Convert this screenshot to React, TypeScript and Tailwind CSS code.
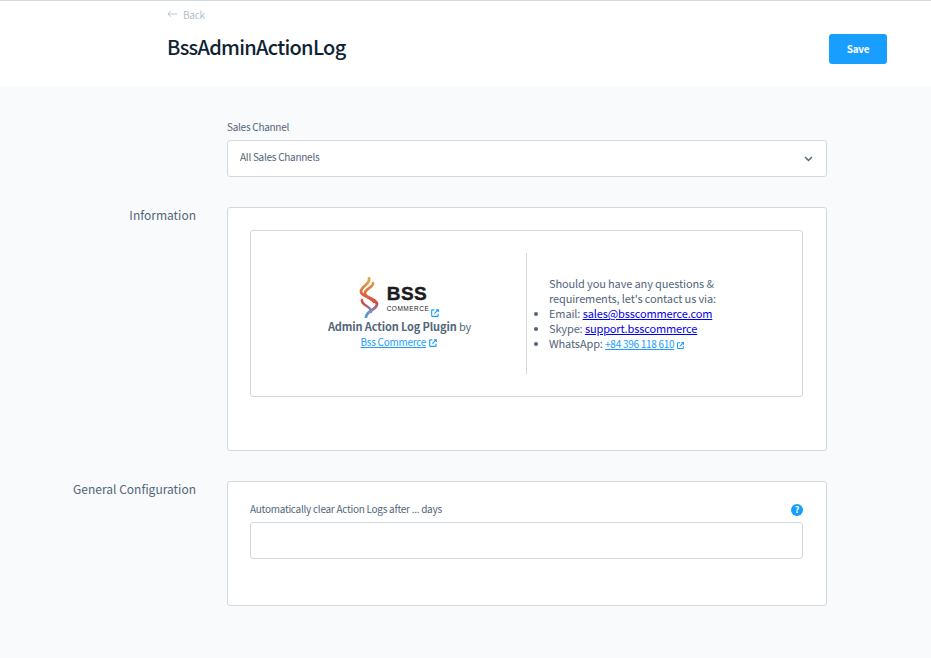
import React from "react";

const F = "font-['Noto_Sans_CJK_SC','Liberation_Sans',sans-serif]";

function Ext({ className = "" }: { className?: string }) {
  return (
    <svg viewBox="0 0 16 16" className={`inline-block ${className}`} fill="none" stroke="currentColor" strokeWidth="1.8">
      <path d="M7 3H3.500A.8.8 0 0 0 2.700 3.800V12.500A.8.8 0 0 0 3.500 13.300H12.200A.8.8 0 0 0 13 12.500V9" />
      <path d="M9.500 2.700H13.300V6.500M13.300 2.700L7 9" />
    </svg>
  );
}

function Logo() {
  return (
    <div className="flex items-start h-[42px]">
      <svg viewBox="0 0 21 41" className="w-[21px] h-[41px]" fill="none" strokeLinecap="round">
        <defs>
          <linearGradient id="a" x1="0" y1="0" x2="0" y2="41" gradientUnits="userSpaceOnUse">
            <stop offset="0" stopColor="#e2b04a" />
            <stop offset="0.4" stopColor="#dd6b3c" />
            <stop offset="0.65" stopColor="#cf4a48" />
            <stop offset="0.85" stopColor="#6c93cc" />
            <stop offset="1" stopColor="#4d9bdc" />
          </linearGradient>
        </defs>
        <path d="M10 1C12 6 3 9 2 14C1 20 17 20 18 27C18 33 8 33 7 40" stroke="url(#a)" strokeWidth="2.800" />
        <path d="M14 6C15 10 6 12 6 16C6 21 14 22 15 25" stroke="url(#a)" strokeWidth="2.600" />
        <path d="M3 23C2 29 13 29 12 35" stroke="url(#a)" strokeWidth="2.600" />
      </svg>
      <div className="ml-[7px] mt-[9px] flex flex-col items-start font-['Liberation_Sans',sans-serif] text-[#1b1b1f]">
        <span className="text-[19px] font-bold tracking-[0.5px] leading-[16px] [-webkit-text-stroke:0.4px_#1b1b1f]">BSS</span>
        <span className="text-[6.500px] tracking-[0.5px] leading-[8px] mt-[3px]">COMMERCE</span>
      </div>
      <Ext className="w-[10px] h-[10px] mt-[31px] ml-[1px] text-[#189eff]" />
    </div>
  );
}

export default function App() {
  return (
    <div className={`min-h-[658px] bg-[#f9fafb] ${F} text-[#52667a]`}>
      <header className="h-[86px] bg-white border-t border-[#d1d9e0] flex justify-between pl-[167px] pr-[44px]">
        <div>
          <div className="flex items-center gap-[5px] mt-[6px] h-[14px] text-[10px] tracking-[-0.27px] text-[#b3bfcc]">
            <svg viewBox="0 0 12 8" className="w-[11px] h-[8px]" fill="none" stroke="currentColor" strokeWidth="1">
              <path d="M11 4H1M4 1L1 4L4 7" />
            </svg>
            <span>Back</span>
          </div>
          <h1 className="mt-[11px] text-[20px] tracking-[-0.7px] leading-[30px] font-medium text-[#0f2433]">BssAdminActionLog</h1>
        </div>
        <button className="mt-[33px] w-[58px] h-[30px] pb-[2px] rounded-[3px] bg-[#189eff] text-white text-[10px] tracking-[-0.27px] font-bold">Save</button>
      </header>

      <main className="pt-[34px] pl-[227px] w-[827px] text-[10px] tracking-[-0.27px]">
        <label className="block leading-[14px] mb-[6px]">Sales Channel</label>
        <div className="h-[37px] pb-[5px] bg-white border border-[#d1d9e0] rounded-[3px] flex items-center justify-between pl-[12px] pr-[13px]">
          <span>All Sales Channels</span>
          <svg viewBox="0 0 10 7" className="w-[9px] h-[6px] mt-[5px] text-[#52667a]" fill="none" stroke="currentColor" strokeWidth="1.800">
            <path d="M1 1.200L5 5.200L9 1.200" />
          </svg>
        </div>

        <section className="relative mt-[30px] h-[244px] bg-white border border-[#d1d9e0] rounded-[3px] pl-[22px] pr-[23px] pt-[22px]">
          <h2 className="absolute right-[630px] top-[-2px] whitespace-nowrap text-[12px] tracking-normal leading-[17px]">Information</h2>
          <div className="h-[167px] border border-[#d1d9e0] rounded-[3px] flex items-center text-[11px] tracking-[-0.13px] leading-[15px]">
            <div className="w-[275px] h-[121px] pt-[24px] pl-[22px] flex flex-col items-center text-center">
              <Logo />
              <div><b className="font-bold">Admin Action Log Plugin</b> by</div>
              <div className="h-[15px] leading-[14px]">
                <a className="text-[#189eff] underline text-[10px] tracking-[-0.27px]">Bss Commerce</a>{" "}
                <Ext className="w-[10px] h-[10px] text-[#189eff]" />
              </div>
            </div>
            <div className="h-[121px] border-l border-[#d1d9e0] pl-[22px] pt-[23px]">
              <p>Should you have any questions &amp;<br />requirements, let's contact us via:</p>
              <ul className="list-disc">
                <li>Email: <a className="text-[#0000ee] underline">sales@bsscommerce.com</a></li>
                <li>Skype: <a className="text-[#0000ee] underline">support.bsscommerce</a></li>
                <li>WhatsApp: <a className="text-[#189eff] underline text-[10px] tracking-[-0.27px]">+84 396 118 610</a><Ext className="w-[9px] h-[9px] ml-[2px] text-[#189eff]" /></li>
              </ul>
            </div>
          </div>
        </section>

        <section className="relative mt-[30px] h-[125px] bg-white border border-[#d1d9e0] rounded-[3px] pl-[22px] pr-[23px] pt-[20px]">
          <h2 className="absolute right-[630px] top-[-2px] whitespace-nowrap text-[12px] tracking-normal leading-[17px]">General Configuration</h2>
          <div className="flex items-start justify-between h-[14px] leading-[14px] mb-[6px]">
            <span>Automatically clear Action Logs after ... days</span>
            <span className="w-[12px] h-[12px] mt-[2px] rounded-full bg-[#189eff] text-white text-[9px] leading-[12px] font-bold text-center">?</span>
          </div>
          <div className="h-[37px] bg-white border border-[#d1d9e0] rounded-[3px]" />
        </section>
      </main>
    </div>
  );
}
